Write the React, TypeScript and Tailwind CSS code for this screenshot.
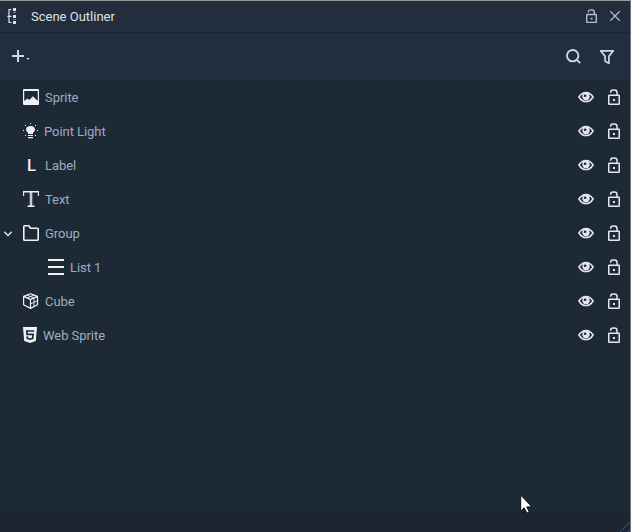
import type { ReactNode } from 'react';

type Row = { name: string; icon: ReactNode; pad: string; gap: string; open?: boolean };

const LockIcon = ({ className }: { className: string }) => (
  <svg viewBox="0 0 12 16" preserveAspectRatio="none" className={className} fill="none" stroke="currentColor" strokeWidth="1.5">
    <rect x="0.75" y="6.25" width="10.5" height="9" rx="0.5" />
    <path d="M2.6 3.8V3.3Q2.6 0.9 5 0.9H6.5Q9 0.9 9 3.4V6" />
    <rect x="5" y="10" width="2" height="2" fill="currentColor" stroke="none" />
  </svg>
);

const EyeIcon = () => (
  <svg viewBox="0 0 16 12" className="h-3 w-4" fill="none" stroke="currentColor">
    <path d="M0.9 6Q3.8 1.4 8 1.4T15.1 6Q12.2 10.6 8 10.6T0.9 6Z" strokeWidth="1.5" />
    <circle cx="8" cy="5.3" r="3.9" fill="currentColor" stroke="none" />
    <path d="M5.7 5.3Q5.6 3.5 7.3 2.9Q7 4.3 8.7 4.2Q8.6 5.6 7.2 6Q6 6.2 5.7 5.3Z" fill="#1e2936" stroke="none" />
    <path d="M3.9 4Q3.2 6.6 5.2 8.7M12.1 4Q12.8 6.6 10.8 8.7" stroke="#1e2936" strokeWidth="0.8" />
  </svg>
);

const SpriteIcon = () => (
  <svg viewBox="0 0 16 16" className="size-4" fill="currentColor">
    <path fillRule="evenodd" d="M1 0H15Q16 0 16 1V15Q16 16 15 16H1Q0 16 0 15V1Q0 0 1 0ZM1.2 2V12L4.5 9.6L6.2 11L10 7.2L14.8 12V2Z" />
  </svg>
);

const BulbIcon = () => (
  <svg viewBox="0 0 16 16" className="size-4" fill="currentColor">
    <path d="M5 11V9.8Q3 8.6 3 6.6Q3.2 3.2 7.5 3Q11.8 3.2 12 6.6Q12 8.6 10 9.8V11Z" />
    <path d="M5 12h5v1H5zM5 14h5v1.2H5zM7 0h1v1H7zM2 2h1v1H2zM12 2h1v1h-1zM0 7h1v1H0zM14 7h1v1h-1zM2 12h1v1H2zM12 12h1v1h-1z" />
  </svg>
);

const TextIcon = () => (
  <svg viewBox="0 0 16 16" className="size-4" fill="none" stroke="currentColor">
    <path d="M0 0.8H16M4.5 15.3H11.5" strokeWidth="1.4" />
    <path d="M0.6 0.5V5M15.4 0.5V5" strokeWidth="1.1" />
    <path d="M8 1V15" strokeWidth="2.6" opacity="0.8" />
  </svg>
);

const FolderIcon = () => (
  <svg viewBox="0 0 16 16" className="size-4" fill="none" stroke="currentColor" strokeWidth="1.6" strokeLinejoin="round">
    <path d="M0.8 1.6Q0.8 0.8 1.6 0.8H6L7.5 3.3H14.4Q15.2 3.3 15.2 4.1V14.4Q15.2 15.2 14.4 15.2H1.6Q0.8 15.2 0.8 14.4Z" />
  </svg>
);

const ListIcon = () => (
  <svg viewBox="0 0 16 16" className="size-4" fill="currentColor">
    <path d="M0 0h16v2H0zM0 7h16v2H0zM0 14h16v2H0z" />
  </svg>
);

const CubeIcon = () => (
  <svg viewBox="0 0 16 16" className="size-4" fill="none" stroke="currentColor" strokeWidth="1.2" strokeLinejoin="round">
    <path d="M7.5 0.7L14.5 3.4V11.7L7.5 15.4L0.6 11.7V3.4ZM0.6 3.4L7.5 6.4L14.5 3.4M7.5 6.4V15.4" />
    <path d="M4 2.1L11 4.9V13.4M11 2.1L4 4.9M7.5 11L14.5 7.5" strokeWidth="0.9" />
  </svg>
);

const Html5Icon = () => (
  <svg viewBox="0 0 14 16" className="h-4 w-3.5">
    <path d="M0 0H14L12.8 14L7 16L1.2 14Z" fill="currentColor" />
    <path d="M11.2 4H3.8L4.1 7.4H10.1L9.7 11.3L7 12.2L4.4 11.3L4.2 9.3" fill="none" stroke="#1e2936" strokeWidth="1.7" />
  </svg>
);

const rows: Row[] = [
  { name: 'Sprite', icon: <SpriteIcon />, pad: 'pl-[23px]', gap: 'ml-1.5' },
  { name: 'Point Light', icon: <BulbIcon />, pad: 'pl-[23px]', gap: 'ml-[5px]' },
  { name: 'Label', icon: <span className="mt-0.5 block w-4 pl-1 text-[16.5px] leading-4 font-medium">L</span>, pad: 'pl-[23px]', gap: 'ml-1.5' },
  { name: 'Text', icon: <TextIcon />, pad: 'pl-[23px]', gap: 'ml-1.5' },
  { name: 'Group', icon: <FolderIcon />, pad: 'pl-1', gap: 'ml-1.5', open: true },
  { name: 'List 1', icon: <ListIcon />, pad: 'pl-12', gap: 'ml-1.5' },
  { name: 'Cube', icon: <CubeIcon />, pad: 'pl-[23px]', gap: 'ml-1.5' },
  { name: 'Web Sprite', icon: <Html5Icon />, pad: 'pl-[23px]', gap: 'ml-1.5' },
];

export default function App() {
  return (
    <div className="relative flex h-[532px] w-[631px] flex-col overflow-hidden border-t border-r border-t-[#969998] border-r-[#6b737c] bg-[#1e2936] font-['Roboto',sans-serif] text-[13px] text-[#9eacc2]">
      <header className="flex h-8 shrink-0 items-center border-b border-[#1b2430] bg-[#222d3d] pl-[7px] text-[#dce2ea]">
        <svg viewBox="0 0 10 16" className="-mt-px h-4 w-2.5" fill="currentColor">
          <path d="M6 0h3v3H6zM6 7h3v3H6zM6 13h3v3H6z" />
          <path d="M6 4h3v1H6zM6 11.3h3v0.7H6z" opacity="0.5" />
          <path d="M4.5 1.5H2V14.5H4.5M0.3 8.3H4.5" fill="none" stroke="currentColor" strokeWidth="1.2" />
        </svg>
        <h1 className="ml-3.5 font-normal">Scene Outliner</h1>
        <LockIcon className="-mt-px ml-auto h-3.5 w-[11px] text-[#b5c0ce]" />
        <svg viewBox="0 0 10 10" className="-mt-px mr-[10px] ml-[13px] size-2.5 text-[#c3cfdd]" fill="none" stroke="currentColor" strokeWidth="1.2">
          <path d="M0.3 0.3L9.7 9.7M9.7 0.3L0.3 9.7" />
        </svg>
      </header>
      <div className="flex h-[47px] shrink-0 items-center bg-[#222d3d] pl-3 text-[#c5daf5]">
        <svg viewBox="0 0 18 12" className="-mt-px h-3 w-[18px]" fill="currentColor">
          <path d="M5 0h2v5h5v2H7v5H5V7H0V5h5zM14.5 8h3.2l-1.6 2z" />
        </svg>
        <svg viewBox="0 0 15 15" className="mr-[19px] ml-auto size-[15px]" fill="none" stroke="currentColor" strokeWidth="1.9">
          <circle cx="6.7" cy="6.7" r="5.7" />
          <path d="M10.6 10.6L14.2 14.2" />
        </svg>
        <svg viewBox="0 0 14 14" className="mt-px mr-4 size-3.5" fill="none" stroke="currentColor" strokeWidth="1.7">
          <path d="M0 0.9H14M1 1L5.1 6.4V11.5M13 1L8.9 6.4V14M5 11L8.9 13.4" />
        </svg>
      </div>
      <ul className="flex-1">
        {rows.map((row) => (
          <li key={row.name} className={`flex h-[34px] items-center ${row.pad}`}>
            {row.open && (
              <svg viewBox="0 0 8 6" className="mt-0.5 mr-[11px] h-1.5 w-2 text-[#e4e8ec]" fill="none" stroke="currentColor" strokeWidth="1.3">
                <path d="M0.3 0.8L4 4.5L7.7 0.8" />
              </svg>
            )}
            <span className="text-[#f0f1f5]">{row.icon}</span>
            <span className={`mt-0.5 tracking-[-0.05px] ${row.gap}`}>{row.name}</span>
            <span className="mr-[10px] ml-auto flex items-center gap-3.5 text-[#e5e5ef]">
              <EyeIcon />
              <LockIcon className="h-4 w-3" />
            </span>
          </li>
        ))}
      </ul>
      <footer className="flex h-5 shrink-0 items-end justify-end bg-[#1f2530]">
        <svg viewBox="0 0 10 10" className="size-2.5" fill="none" stroke="#365775" strokeWidth="1">
          <path d="M0 10L10 0M8 10L10 8" />
        </svg>
      </footer>
      <svg viewBox="0 0 13 20" className="absolute top-[493px] left-[520px] h-5 w-[13px]" fill="#fff" stroke="#0b0d18" strokeWidth="1">
        <path d="M0.7 1V17.2L4.2 13.8L6.9 19.2L9.3 18L6.8 12.9H11.9Z" />
      </svg>
    </div>
  );
}
